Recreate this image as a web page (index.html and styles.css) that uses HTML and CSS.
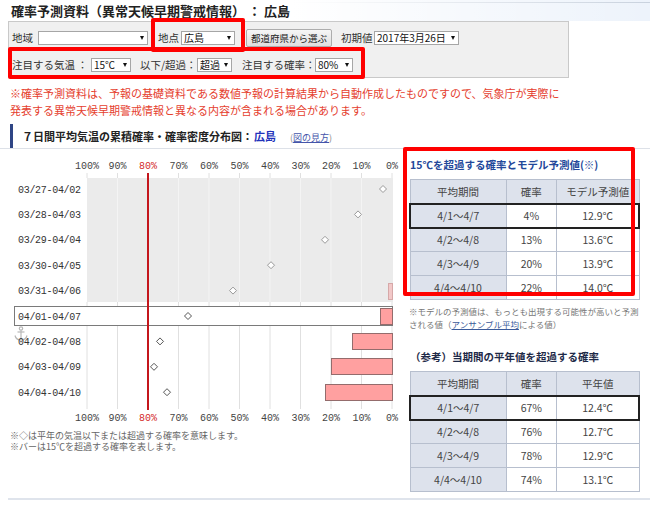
FILE: index.html
```html
<!DOCTYPE html>
<html lang="ja">
<head>
  <meta charset="UTF-8">
  <title>確率予測資料（異常天候早期警戒情報）：広島</title>
  <link rel="stylesheet" href="styles.css">
</head>
<body>
  <h1 class="title">確率予測資料（異常天候早期警戒情報）&nbsp;：&nbsp;広島</h1>

  <!-- 条件の選択 -->
  <div class="controls">
    <div class="ctl-row">
      <span class="lbl lbl-area">地域</span>
      <span class="sel sel-area"></span>
      <span class="lbl lbl-point">地点</span>
      <span class="sel sel-point">広島</span>
      <button class="btn" type="button">都道府県から選ぶ</button>
      <span class="lbl lbl-init">初期値</span>
      <span class="sel sel-init">2017年3月26日</span>
    </div>
    <div class="ctl-row">
      <span class="lbl lbl-temp">注目する気温 ：</span>
      <span class="sel sel-temp">15℃</span>
      <span class="lbl lbl-dir">以下/超過：</span>
      <span class="sel sel-dir">超過</span>
      <span class="lbl lbl-prob">注目する確率：</span>
      <span class="sel sel-prob">80%</span>
    </div>
  </div>

  <p class="caution">※確率予測資料は、予報の基礎資料である数値予報の計算結果から自動作成したものですので、気象庁が実際に<br>発表する異常天候早期警戒情報と異なる内容が含まれる場合があります。</p>

  <div class="sec">
    <h2 class="sec-head">７日間平均気温の累積確率・確率密度分布図：<span class="place">広島</span><span class="howto">(<a href="#">図の見方</a>)</span></h2>
  </div>

  <div class="content">
    <div class="chart">
      <svg class="plot" width="400" height="280" viewBox="0 150 400 280">
        <g class="axis">
          <text x="87" y="169">100%</text>
          <text x="117.5" y="169">90%</text>
          <text x="148" y="169" class="hot">80%</text>
          <text x="178.5" y="169">70%</text>
          <text x="209" y="169">60%</text>
          <text x="239.5" y="169">50%</text>
          <text x="270" y="169">40%</text>
          <text x="300.5" y="169">30%</text>
          <text x="331" y="169">20%</text>
          <text x="361.5" y="169">10%</text>
          <text x="392" y="169">0%</text>
        </g>
        <rect x="87" y="178" width="306" height="124" fill="#ebebeb"/>
        <g stroke="#f4f4f4">
          <line x1="117.5" y1="178" x2="117.5" y2="302"/><line x1="178.5" y1="178" x2="178.5" y2="302"/>
          <line x1="209" y1="178" x2="209" y2="302"/><line x1="239.5" y1="178" x2="239.5" y2="302"/>
          <line x1="270" y1="178" x2="270" y2="302"/><line x1="300.5" y1="178" x2="300.5" y2="302"/>
          <line x1="331" y1="178" x2="331" y2="302"/><line x1="361.5" y1="178" x2="361.5" y2="302"/>
        </g>
        <g stroke="#e0e0e0">
          <line x1="87" y1="173" x2="87" y2="178"/><line x1="87" y1="302" x2="87" y2="409"/>
          <line x1="117.5" y1="173" x2="117.5" y2="178"/><line x1="117.5" y1="302" x2="117.5" y2="409"/>
          <line x1="178.5" y1="173" x2="178.5" y2="178"/><line x1="178.5" y1="302" x2="178.5" y2="409"/>
          <line x1="209" y1="173" x2="209" y2="178"/><line x1="209" y1="302" x2="209" y2="409"/>
          <line x1="239.5" y1="173" x2="239.5" y2="178"/><line x1="239.5" y1="302" x2="239.5" y2="409"/>
          <line x1="270" y1="173" x2="270" y2="178"/><line x1="270" y1="302" x2="270" y2="409"/>
          <line x1="300.5" y1="173" x2="300.5" y2="178"/><line x1="300.5" y1="302" x2="300.5" y2="409"/>
          <line x1="331" y1="173" x2="331" y2="178"/><line x1="331" y1="302" x2="331" y2="409"/>
          <line x1="361.5" y1="173" x2="361.5" y2="178"/><line x1="361.5" y1="302" x2="361.5" y2="409"/>
          <line x1="392" y1="173" x2="392" y2="178"/><line x1="392" y1="302" x2="392" y2="409"/>
        </g>

        <!-- 選択中の期間 -->
        <rect x="14.5" y="306.5" width="378" height="19" fill="#fff" stroke="#7a7a7a"/>
        <g class="anchor" fill="none" stroke="#b8b8b8" stroke-width="1.2">
          <circle cx="21" cy="328.5" r="1.7"/>
          <line x1="21" y1="330.2" x2="21" y2="340"/>
          <line x1="17.5" y1="332" x2="24.5" y2="332"/>
          <path d="M15 335.5 Q16 340 21 340 Q26 340 27 335.5"/>
        </g>

        <g class="dates">
          <text x="18" y="192.5" textLength="63">03/27-04/02</text>
          <text x="18" y="217.9" textLength="63">03/28-04/03</text>
          <text x="18" y="243.3" textLength="63">03/29-04/04</text>
          <text x="18" y="268.7" textLength="63">03/30-04/05</text>
          <text x="18" y="294.1" textLength="63">03/31-04/06</text>
          <text x="18" y="319.5" textLength="63">04/01-04/07</text>
          <text x="18" y="344.9" textLength="63">04/02-04/08</text>
          <text x="18" y="370.3" textLength="63">04/03-04/09</text>
          <text x="18" y="395.7" textLength="63">04/04-04/10</text>
        </g>

        <!-- 15℃超過の確率 -->
        <rect x="388.5" y="283.5" width="4" height="16" fill="#f2c8c8" stroke="#d6a8a8"/>
        <g fill="#ffa0a0" stroke="#946c6c">
          <rect x="380.5" y="308.5" width="12" height="16"/>
          <rect x="352.5" y="333.5" width="40" height="16"/>
          <rect x="331.5" y="358.5" width="61" height="16"/>
          <rect x="325.5" y="384.5" width="67" height="16"/>
        </g>

        <line x1="148" y1="173" x2="148" y2="410" stroke="#c4161c" stroke-width="2"/>

        <!-- 平年の気温以下/超過の確率 -->
        <g fill="#fff" stroke="#999">
          <path d="M383 185.5 L386.5 189 L383 192.5 L379.5 189 Z"/>
          <path d="M358 210.9 L361.5 214.4 L358 217.9 L354.5 214.4 Z"/>
          <path d="M325 236.3 L328.5 239.8 L325 243.3 L321.5 239.8 Z"/>
          <path d="M271 261.7 L274.5 265.2 L271 268.7 L267.5 265.2 Z"/>
          <path d="M233 287.1 L236.5 290.6 L233 294.1 L229.5 290.6 Z"/>
        </g>
        <g fill="#fff" stroke="#555">
          <path d="M188 312.5 L191.5 316 L188 319.5 L184.5 316 Z"/>
          <path d="M160 337.9 L163.5 341.4 L160 344.9 L156.5 341.4 Z"/>
          <path d="M154 363.3 L157.5 366.8 L154 370.3 L150.5 366.8 Z"/>
          <path d="M167 388.7 L170.5 392.2 L167 395.7 L163.5 392.2 Z"/>
        </g>

        <g class="axis">
          <text x="87" y="421">100%</text>
          <text x="117.5" y="421">90%</text>
          <text x="148" y="421" class="hot">80%</text>
          <text x="178.5" y="421">70%</text>
          <text x="209" y="421">60%</text>
          <text x="239.5" y="421">50%</text>
          <text x="270" y="421">40%</text>
          <text x="300.5" y="421">30%</text>
          <text x="331" y="421">20%</text>
          <text x="361.5" y="421">10%</text>
          <text x="392" y="421">0%</text>
        </g>
      </svg>
      <p class="chart-note">※◇は平年の気温以下または超過する確率を意味します。<br>※バーは15℃を超過する確率を表します。</p>
    </div>

    <div class="side">
      <h3 class="tbl-title blue">15℃を超過する確率とモデル予測値(※)</h3>
      <table class="prob">
        <tr><th class="c1">平均期間</th><th class="c2">確率</th><th class="c3">モデル予測値</th></tr>
        <tr class="cur"><th>4/1～4/7</th><td>4%</td><td>12.9℃</td></tr>
        <tr><th>4/2～4/8</th><td>13%</td><td>13.6℃</td></tr>
        <tr><th>4/3～4/9</th><td>20%</td><td>13.9℃</td></tr>
        <tr><th>4/4～4/10</th><td>22%</td><td>14.0℃</td></tr>
      </table>
      <p class="tbl-note">※モデルの予測値は、もっとも出現する可能性が高いと予測される値（<a href="#">アンサンブル平均</a>による値）</p>

      <h3 class="tbl-title">（参考）当期間の平年値を超過する確率</h3>
      <table class="prob">
        <tr><th class="c1">平均期間</th><th class="c2">確率</th><th class="c3">平年値</th></tr>
        <tr class="cur"><th>4/1～4/7</th><td>67%</td><td>12.4℃</td></tr>
        <tr><th>4/2～4/8</th><td>76%</td><td>12.7℃</td></tr>
        <tr><th>4/3～4/9</th><td>78%</td><td>12.9℃</td></tr>
        <tr><th>4/4～4/10</th><td>74%</td><td>13.1℃</td></tr>
      </table>
    </div>
  </div>

  <div class="rule"></div>
  <p class="more">※ 平年値は1981～2010年の30年間の観測値から求めた値です。累積確率の詳しい見方は「図の見方」をご覧ください。</p>

  <!-- 注目箇所の赤枠 -->
  <div class="mark mark-point"></div>
  <div class="mark mark-cond"></div>
  <div class="mark mark-table"></div>
</body>
</html>
```

FILE: styles.css
```css
* { box-sizing: border-box; }
html { overflow: hidden; }
body {
  margin: 0;
  width: 650px;
  font-family: "Noto Sans CJK JP", "Liberation Sans", sans-serif;
  font-size: 11px;
  color: #333;
  background: #fff;
}

.title {
  margin: 0;
  height: 21px;
  padding-left: 11px;
  font-size: 13px;
  line-height: 22px;
  color: #222;
  background:
    linear-gradient(90deg, #fff 45%, rgba(255,255,255,0) 100%),
    linear-gradient(#c9d2de, #c9d2de) 0 2px / 100% 1px no-repeat,
    #edf3fb;
}

/* 条件選択 */
.controls {
  width: 561px;
  height: 57px;
  margin-left: 8px;
  padding: 8px 0 0 3px;
  border: 1px solid #c9c9c9;
  background: #f0f0f0;
  font-size: 10.5px;
  color: #333;
}
.ctl-row { display: flex; align-items: center; height: 15px; white-space: nowrap; }
.ctl-row + .ctl-row { margin-top: 12px; }
.lbl { flex: none; }
.lbl-area { width: 26px; }
.lbl-point { width: 23px; }
.lbl-init { width: 33px; }
.lbl-temp { width: 79px; }
.lbl-dir { width: 57px; }
.lbl-prob { width: 73px; }
.sel {
  flex: none;
  display: flex;
  align-items: center;
  height: 14px;
  padding: 0 3px 0 2px;
  border: 1px solid #a6a6a6;
  background: #fff;
  font-size: 10px;
  color: #111;
}
.sel::after {
  content: "";
  margin-left: auto;
  border-left: 2.5px solid transparent;
  border-right: 2.5px solid transparent;
  border-top: 4px solid #111;
}
.sel-area { width: 110px; margin-right: 10px; }
.sel-point { width: 54px; margin-right: 11px; }
.sel-init { width: 85px; }
.sel-temp { width: 40px; margin-right: 9px; }
.sel-dir { width: 35px; margin-right: 10px; }
.sel-prob { width: 38px; }
.btn {
  flex: none;
  width: 86px;
  height: 18px;
  margin-right: 9px;
  padding: 0;
  border: 1px solid #adadad;
  border-radius: 2px;
  background: linear-gradient(#f6f6f6, #dedede);
  font-family: inherit;
  font-size: 9.5px;
  color: #222;
}

.caution {
  margin: 7px 0 0 10px;
  font-size: 11px;
  line-height: 17px;
  color: #e5402e;
}

/* 見出し */
.sec { margin-top: 5px; border-bottom: 1px solid #dde1e8; }
.sec-head {
  margin: 0 0 0 10px;
  height: 24px;
  padding-left: 9px;
  border-left: 3px solid #2f4585;
  font-size: 11px;
  line-height: 24px;
  color: #222;
}
.place { color: #2233bb; margin-left: 1px; }
.howto { margin-left: 14px; font-size: 9px; font-weight: normal; color: #888; }
.howto a { color: #4455aa; }

.content { display: flex; margin-top: 1px; }

/* 分布図 */
.chart { width: 400px; flex: none; }
.plot { display: block; }
.plot text { font-family: "Liberation Mono", "DejaVu Sans Mono", monospace; font-size: 10px; fill: #333; }
.plot .axis text { text-anchor: middle; fill: #444; }
.plot .axis .hot { fill: #d42a2a; }
.chart-note {
  margin: 0 0 0 10px;
  font-size: 9px;
  line-height: 11px;
  color: #666;
}

/* 右側の表 */
.side { width: 237px; flex: none; margin-left: 3px; padding: 8px 0 0 6px; }
.tbl-title {
  margin: 0 0 7px 1px;
  font-size: 10.5px;
  line-height: 14px;
  color: #1e2a48;
  white-space: nowrap;
}
.tbl-title.blue { color: #23489a; }
.prob {
  width: 231px;
  border-collapse: collapse;
  font-size: 10.5px;
  color: #444;
}
.prob th, .prob td {
  height: 24px;
  padding: 0;
  border: 1px solid #b7bfce;
  text-align: center;
  font-weight: normal;
}
.prob th { background: #dde2ec; }
.prob td { background: #fff; }
.prob .c1 { width: 97px; }
.prob .c2 { width: 51px; }
.prob .c3 { width: 83px; }
.prob .cur th, .prob .cur td { border-top: 2px solid #222; border-bottom: 2px solid #222; }
.prob .cur th { border-left: 2px solid #222; }
.prob .cur td:last-child { border-right: 2px solid #222; }
.tbl-note {
  margin: 5px 0 20px 0;
  font-size: 8.5px;
  line-height: 12.5px;
  color: #777;
}
.tbl-note a { color: #3a5a9a; }

.rule { margin: 6px 0 0 8px; border-top: 2px solid #dfe4ec; }
.more { margin: 2px 0 0 10px; font-size: 10px; color: #aaa; white-space: nowrap; }

/* 赤枠 */
.mark { position: absolute; border: 4px solid #f00; border-radius: 2px; }
.mark-point { left: 151px; top: 18px; width: 94px; height: 34px; }
.mark-cond { left: 8px; top: 47px; width: 357px; height: 32px; }
.mark-table { left: 403px; top: 147px; width: 232px; height: 149px; }
```
